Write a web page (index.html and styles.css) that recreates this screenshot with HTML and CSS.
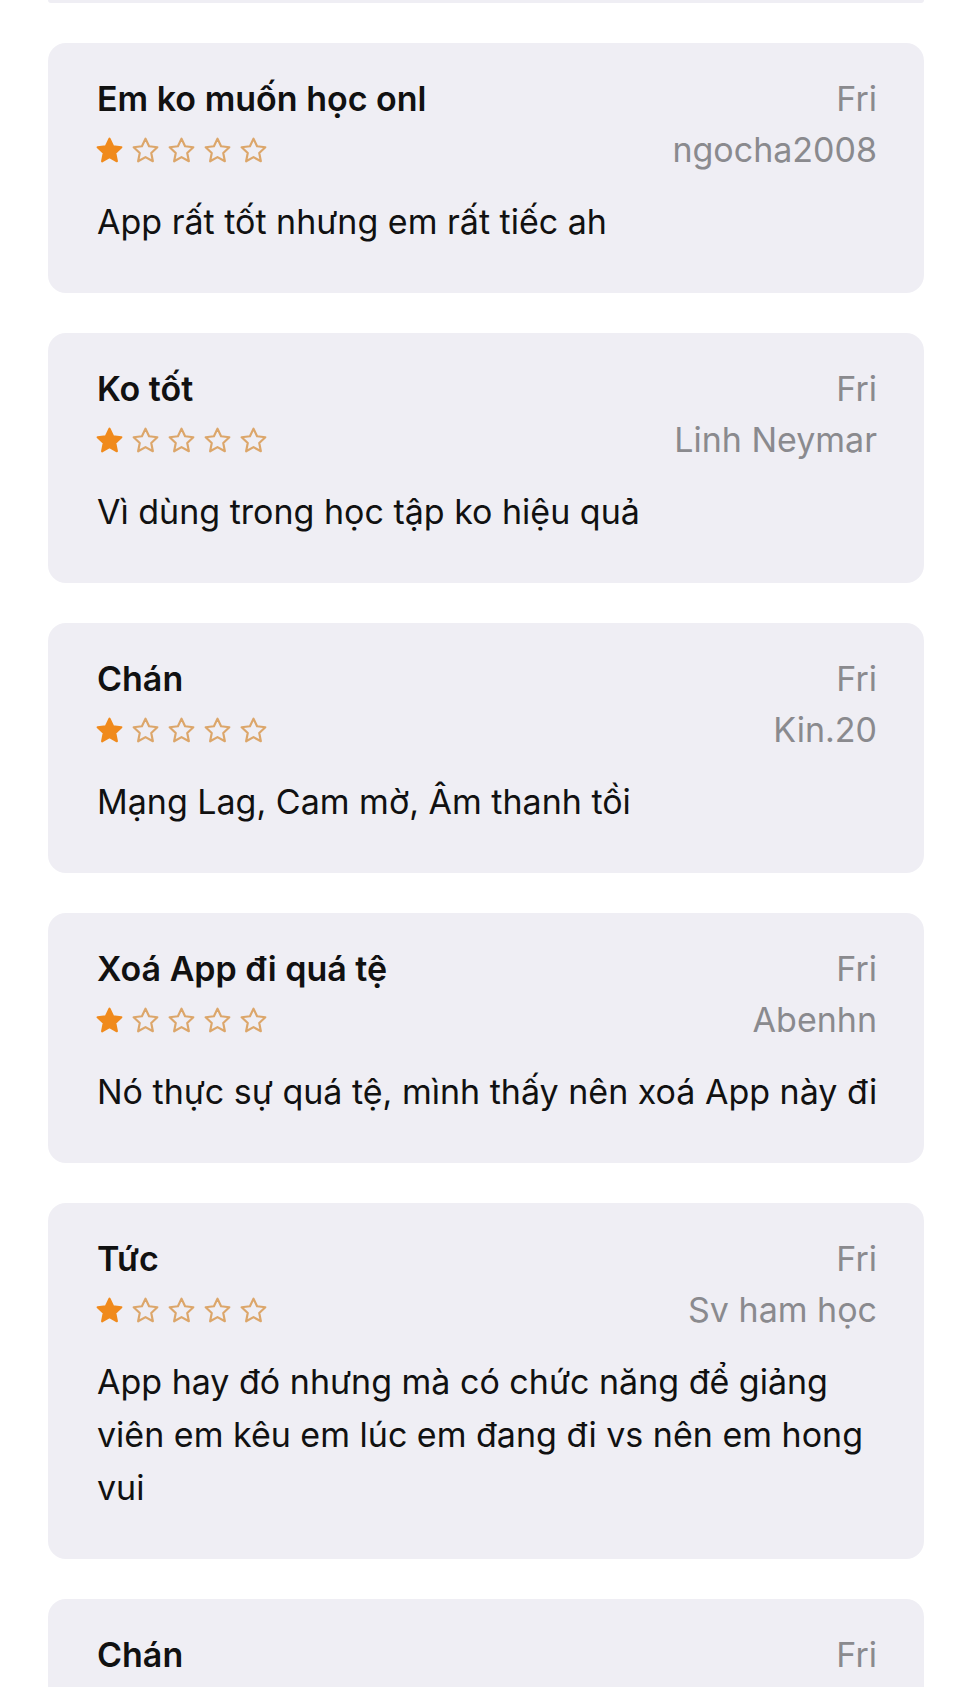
FILE: index.html
```html
<!DOCTYPE html>
<html lang="vi">
<head>
  <meta charset="UTF-8">
  <title>Ratings &amp; Reviews</title>
  <link rel="stylesheet" href="styles.css">
</head>
<body>

  <!-- shared star shape -->
  <svg class="defs" width="0" height="0">
    <symbol id="star" viewBox="0 0 24 24">
      <path d="M12 2.2l2.95 6.3 6.85.8-5.05 4.75 1.35 6.85L12 17.5l-6.1 3.4 1.35-6.85L2.2 9.3l6.85-.8z"/>
    </symbol>
  </svg>

  <div class="reviews">
    <div class="card stub"></div>

    <div class="card">
      <div class="head"><span class="title">Em ko muốn học onl</span><span class="date">Fri</span></div>
      <div class="meta">
        <div class="stars">
          <svg class="on"><use href="#star"/></svg><svg><use href="#star"/></svg><svg><use href="#star"/></svg><svg><use href="#star"/></svg><svg><use href="#star"/></svg>
        </div>
        <span class="author">ngocha2008</span>
      </div>
      <p class="text">App rất tốt nhưng em rất tiếc ah</p>
    </div>

    <div class="card">
      <div class="head"><span class="title">Ko tốt</span><span class="date">Fri</span></div>
      <div class="meta">
        <div class="stars">
          <svg class="on"><use href="#star"/></svg><svg><use href="#star"/></svg><svg><use href="#star"/></svg><svg><use href="#star"/></svg><svg><use href="#star"/></svg>
        </div>
        <span class="author">Linh Neymar</span>
      </div>
      <p class="text">Vì dùng trong học tập ko hiệu quả</p>
    </div>

    <div class="card">
      <div class="head"><span class="title">Chán</span><span class="date">Fri</span></div>
      <div class="meta">
        <div class="stars">
          <svg class="on"><use href="#star"/></svg><svg><use href="#star"/></svg><svg><use href="#star"/></svg><svg><use href="#star"/></svg><svg><use href="#star"/></svg>
        </div>
        <span class="author">Kin.20</span>
      </div>
      <p class="text">Mạng Lag, Cam mờ, Âm thanh tồi</p>
    </div>

    <div class="card">
      <div class="head"><span class="title">Xoá App đi quá tệ</span><span class="date">Fri</span></div>
      <div class="meta">
        <div class="stars">
          <svg class="on"><use href="#star"/></svg><svg><use href="#star"/></svg><svg><use href="#star"/></svg><svg><use href="#star"/></svg><svg><use href="#star"/></svg>
        </div>
        <span class="author">Abenhn</span>
      </div>
      <p class="text">Nó thực sự quá tệ, mình thấy nên xoá App này đi</p>
    </div>

    <div class="card">
      <div class="head"><span class="title">Tức</span><span class="date">Fri</span></div>
      <div class="meta">
        <div class="stars">
          <svg class="on"><use href="#star"/></svg><svg><use href="#star"/></svg><svg><use href="#star"/></svg><svg><use href="#star"/></svg><svg><use href="#star"/></svg>
        </div>
        <span class="author">Sv ham học</span>
      </div>
      <p class="text">App hay đó nhưng mà có chức năng để giảng viên em kêu em lúc em đang đi vs nên em hong vui</p>
    </div>

    <div class="card">
      <div class="head"><span class="title">Chán</span><span class="date">Fri</span></div>
      <div class="meta">
        <div class="stars">
          <svg class="on"><use href="#star"/></svg><svg><use href="#star"/></svg><svg><use href="#star"/></svg><svg><use href="#star"/></svg><svg><use href="#star"/></svg>
        </div>
      </div>
    </div>
  </div>

</body>
</html>
```

FILE: styles.css
```css
body {
  margin: 0;
  background: #fff;
  font-family: Inter, "Noto Sans", sans-serif;
  color: #111;
}
.defs {
  position: absolute;
}
.reviews {
  display: flex;
  flex-direction: column;
  gap: 40px;
  padding: 0 36px 0 48px;
}
.card {
  background: #efeef4;
  border-radius: 18px;
  padding: 36px 47px 45px 49px;
}
.card.stub {
  height: 3px;
  padding: 0;
  border-radius: 0 0 3px 3px;
}
.head {
  display: flex;
  justify-content: space-between;
  align-items: baseline;
  line-height: 40px;
}
.title {
  font-size: 34px;
  font-weight: 600;
}
.date {
  font-size: 34px;
  color: #8a8a8e;
}
.meta {
  display: flex;
  justify-content: space-between;
  align-items: center;
  height: 44px;
  margin-top: 9px;
}
.author {
  font-size: 34px;
  line-height: 44px;
  color: #8a8a8e;
}
.stars {
  display: flex;
  gap: 7px;
  margin-left: -2px;
}
.stars svg {
  width: 29px;
  height: 29px;
  fill: none;
  stroke: #dca66a;
  stroke-width: 1.8;
  stroke-linejoin: round;
}
.stars svg.on {
  fill: #f08a1c;
  stroke: #f08a1c;
}
.text {
  margin: 23px -12px 0 0;
  font-size: 34px;
  line-height: 53px;
}
```
